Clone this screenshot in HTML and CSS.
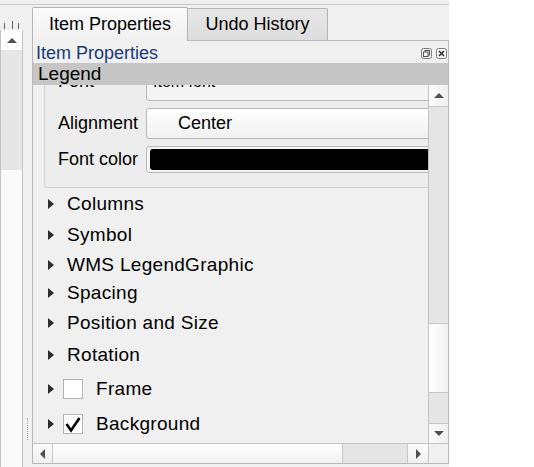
FILE: index.html
```html
<!DOCTYPE html>
<html>
<head>
<meta charset="utf-8">
<link rel="stylesheet" href="styles.css">
</head>
<body>
<div class="win">
  <div class="topline"></div>
  <div class="main">
    <div class="leftpanel">
      <div class="ruler">
        <span class="tick t1"></span>
        <span class="tick t2"></span>
        <span class="tick t3"></span>
      </div>
      <div class="lscroll">
        <div class="lbtn"><span class="arr-up"></span></div>
        <div class="ltrack"></div>
        <div class="lrest"></div>
      </div>
    </div>
    <div class="splitter"><div class="dots"></div></div>
    <div class="tabwidget">
      <div class="tabbar">
        <div class="tab active">Item Properties</div>
        <div class="tab">Undo History</div>
      </div>
      <div class="pane">
        <div class="docktitle">
          <span class="dtext">Item Properties</span>
          <div class="dockbtns">
            <svg class="dbtn" width="11" height="11" viewBox="0 0 11 11">
              <rect x="0.5" y="0.5" width="10" height="10" rx="2" fill="#f4f4f4" stroke="#7a7a7a"/>
              <rect x="4" y="2.5" width="4.5" height="4.5" fill="none" stroke="#555"/>
              <rect x="2.5" y="4" width="4.5" height="4.5" fill="#f4f4f4" stroke="#555"/>
            </svg>
            <svg class="dbtn" width="11" height="11" viewBox="0 0 11 11">
              <rect x="0.5" y="0.5" width="10" height="10" rx="2" fill="#f4f4f4" stroke="#7a7a7a"/>
              <path d="M3 3 L8 8 M8 3 L3 8" stroke="#333" stroke-width="1.6"/>
            </svg>
          </div>
        </div>
        <div class="legendbar">Legend</div>
        <div class="scrollarea">
          <div class="viewport">
            <div class="content">
              <div class="group">
                <div class="grow r1">
                  <span class="lbl">Font</span>
                  <div class="field lineedit">Item font</div>
                </div>
                <div class="grow r2">
                  <span class="lbl">Alignment</span>
                  <div class="field combo">Center</div>
                </div>
                <div class="grow r3">
                  <span class="lbl">Font color</span>
                  <div class="field colorbtn"><div class="swatch"></div></div>
                </div>
              </div>
              <div class="items">
                <div class="item h30"><span class="tri"></span><span class="itext">Columns</span></div>
                <div class="item h31"><span class="tri"></span><span class="itext">Symbol</span></div>
                <div class="item h29"><span class="tri"></span><span class="itext">WMS LegendGraphic</span></div>
                <div class="item h28"><span class="tri"></span><span class="itext">Spacing</span></div>
                <div class="item h32"><span class="tri"></span><span class="itext">Position and Size</span></div>
                <div class="item h32"><span class="tri"></span><span class="itext">Rotation</span></div>
                <div class="item h36"><span class="tri"></span><span class="chk"></span><span class="itext">Frame</span></div>
                <div class="item h34"><span class="tri"></span><span class="chk"><svg width="18" height="18" viewBox="0 0 18 18"><path d="M2.5 9 L7 15.5 L15.5 3" fill="none" stroke="#000" stroke-width="2.6"/></svg></span><span class="itext">Background</span></div>
              </div>
            </div>
          </div>
          <div class="vbar">
            <div class="vbtn top"><span class="arr-up"></span></div>
            <div class="vtrack t1"></div>
            <div class="vthumb"></div>
            <div class="vtrack t2"></div>
            <div class="vbtn bottom"><span class="arr-down"></span></div>
          </div>
          <div class="hbar">
            <div class="hbtn left"><span class="arr-left"></span></div>
            <div class="hthumb"></div>
            <div class="htrack"></div>
            <div class="hbtn right"><span class="arr-right"></span></div>
          </div>
          <div class="corner"></div>
        </div>
      </div>
    </div>
  </div>
</div>
</body>
</html>
```
FILE: styles.css
```css
* { box-sizing: border-box; }
html, body { margin: 0; padding: 0; }
body {
  width: 534px;
  height: 467px;
  background: #ffffff;
  font-family: "Liberation Sans", Arial, sans-serif;
  font-size: 18px;
  color: #000;
  overflow: hidden;
}
.win {
  width: 449px;
  height: 467px;
  background: #f0f0f0;
  display: flex;
  flex-direction: column;
}
.topline {
  height: 5px;
  border-bottom: 1px solid #c9c9c9;
}
.main {
  flex: 1;
  display: flex;
  min-height: 0;
}
/* left panel */
.leftpanel {
  width: 23px;
  display: flex;
  flex-direction: column;
}
.ruler {
  height: 25px;
  display: flex;
  align-items: flex-end;
  padding-bottom: 1px;
}
.tick {
  width: 1px;
  background: #606060;
}
.tick.t1 { height: 6px; margin-left: 4px; }
.tick.t2 { height: 8px; margin-left: 7px; }
.tick.t3 { height: 6px; margin-left: 5px; }
.lscroll {
  flex: 1;
  border-left: 1px solid #c2c2c2;
  border-right: 1px solid #c2c2c2;
  display: flex;
  flex-direction: column;
  background: #fafafa;
}
.lbtn {
  height: 20px;
  background: #fdfdfd;
  display: flex;
  align-items: center;
  justify-content: center;
}
.ltrack {
  height: 120px;
  background: #e6e6e6;
}
.lrest { flex: 1; }
.arr-up {
  width: 0; height: 0;
  border-left: 5px solid transparent;
  border-right: 5px solid transparent;
  border-bottom: 5px solid #505050;
}
.arr-down {
  width: 0; height: 0;
  border-left: 5px solid transparent;
  border-right: 5px solid transparent;
  border-top: 5px solid #505050;
}
.arr-left {
  width: 0; height: 0;
  border-top: 5px solid transparent;
  border-bottom: 5px solid transparent;
  border-right: 5px solid #505050;
}
.arr-right {
  width: 0; height: 0;
  border-top: 5px solid transparent;
  border-bottom: 5px solid transparent;
  border-left: 5px solid #505050;
}
.splitter {
  width: 9px;
  display: flex;
  flex-direction: column;
  justify-content: flex-end;
  padding-bottom: 27px;
}
.dots {
  height: 22px;
  margin-left: 4px;
  border-left: 1px dotted #a8a8a8;
}
/* tabs */
.tabwidget {
  width: 417px;
  display: flex;
  flex-direction: column;
}
.tabbar {
  height: 35px;
  display: flex;
  align-items: flex-end;
}
.tab {
  display: flex;
  align-items: center;
  justify-content: center;
  border: 1px solid #b4b4b4;
  border-bottom: none;
  border-radius: 2px 2px 0 0;
}
.tab.active {
  width: 156px;
  height: 34px;
  margin-bottom: -1px;
  background: linear-gradient(#fbfbfb, #f0f0f0);
  position: relative;
  z-index: 1;
  padding-bottom: 1px;
}
.tab:not(.active) {
  width: 141px;
  height: 32px;
  margin-left: -1px;
  background: linear-gradient(#e6e6e6, #dddddd);
}
.pane {
  height: 424px;
  border: 1px solid #b8b8b8;
  display: flex;
  flex-direction: column;
  background: #f0f0f0;
}
.docktitle {
  height: 22px;
  display: flex;
  align-items: center;
  justify-content: space-between;
  padding: 0 1px 0 3px;
}
.dtext {
  color: #1b3a76;
  font-size: 18px;
  line-height: 22px;
  padding-top: 2px;
}
.dockbtns {
  display: flex;
  gap: 4px;
  padding-top: 2px;
}
.dbtn { display: block; }
.legendbar {
  height: 22px;
  background: #c6c6c6;
  padding-left: 5px;
  font-size: 19px;
  line-height: 22px;
}
/* scroll area */
.scrollarea {
  flex: 1;
  display: grid;
  grid-template-columns: 1fr 20px;
  grid-template-rows: 1fr 20px;
  min-height: 0;
}
.viewport {
  overflow: hidden;
  position: relative;
}
.content {
  margin-top: -32px;
}
.group {
  margin-left: 11px;
  width: 420px;
  border: 1px solid #d3d3d3;
  border-radius: 3px;
  background: #ededed;
  padding: 8px 0 14px 13px;
  display: flex;
  flex-direction: column;
  gap: 7px;
}
.grow {
  display: grid;
  grid-template-columns: 88px 1fr;
  align-items: center;
}
.grow.r1 { height: 39px; }
.grow.r2 { height: 31px; }
.grow.r3 { height: 27px; }
.lbl { font-size: 18px; }
.field {
  height: 100%;
  border: 1px solid #b9b9b9;
  border-radius: 3px;
  display: flex;
  align-items: center;
}
.lineedit {
  background: #f4f4f4;
  padding-left: 6px;
  font-size: 16px;
}
.combo {
  background: linear-gradient(#fefefe, #f1f1f1);
  padding-left: 31px;
}
.colorbtn {
  background: #f4f4f4;
  padding: 2px 3px;
}
.swatch {
  width: 100%;
  height: 100%;
  background: #000;
  border-radius: 3px;
}
.items {
  margin-top: 1px;
}
.item {
  display: flex;
  align-items: center;
  padding-left: 15px;
  font-size: 19px;
  letter-spacing: 0.3px;
}
.item.h28 { height: 28px; }
.item.h29 { height: 29px; }
.item.h30 { height: 30px; }
.item.h31 { height: 31px; }
.item.h32 { height: 32px; }
.item.h34 { height: 34px; }
.item.h36 { height: 36px; }
.tri {
  width: 0; height: 0;
  border-top: 5px solid transparent;
  border-bottom: 5px solid transparent;
  border-left: 6px solid #2e2e2e;
  margin-right: 13px;
}
.chk {
  width: 20px;
  height: 20px;
  border: 1px solid #b3b3b3;
  background: #fff;
  margin-left: -4px;
  margin-right: 13px;
  display: flex;
  align-items: center;
  justify-content: center;
}
.chk svg { display: block; }
.vbar {
  border-left: 1px solid #c4c4c4;
  display: flex;
  flex-direction: column;
  background: #e5e5e5;
}
.vbtn {
  display: flex;
  align-items: center;
  justify-content: center;
  background: linear-gradient(90deg, #fbfbfb, #f0f0f0);
}
.vbtn.top { height: 22px; border-bottom: 1px solid #c8c8c8; }
.vbtn.bottom { height: 20px; border-top: 1px solid #c8c8c8; }
.vtrack.t1 { height: 216px; }
.vtrack.t2 { height: 30px; }
.vthumb {
  height: 70px;
  border-top: 1px solid #c8c8c8;
  border-bottom: 1px solid #c8c8c8;
  background: linear-gradient(90deg, #ffffff, #f1f1f1);
}
.hbar {
  border-top: 1px solid #c4c4c4;
  display: flex;
  background: #e5e5e5;
}
.hbtn {
  width: 20px;
  display: flex;
  align-items: center;
  justify-content: center;
  background: linear-gradient(#fbfbfb, #f0f0f0);
}
.hbtn.left { border-right: 1px solid #c8c8c8; }
.hbtn.right { width: 21px; border-left: 1px solid #c8c8c8; }
.hthumb {
  width: 290px;
  border-right: 1px solid #c8c8c8;
  background: linear-gradient(#ffffff, #f1f1f1);
}
.htrack { flex: 1; }
.corner {
  border-left: 1px solid #c4c4c4;
  border-top: 1px solid #c4c4c4;
  background: #f0f0f0;
}
```
